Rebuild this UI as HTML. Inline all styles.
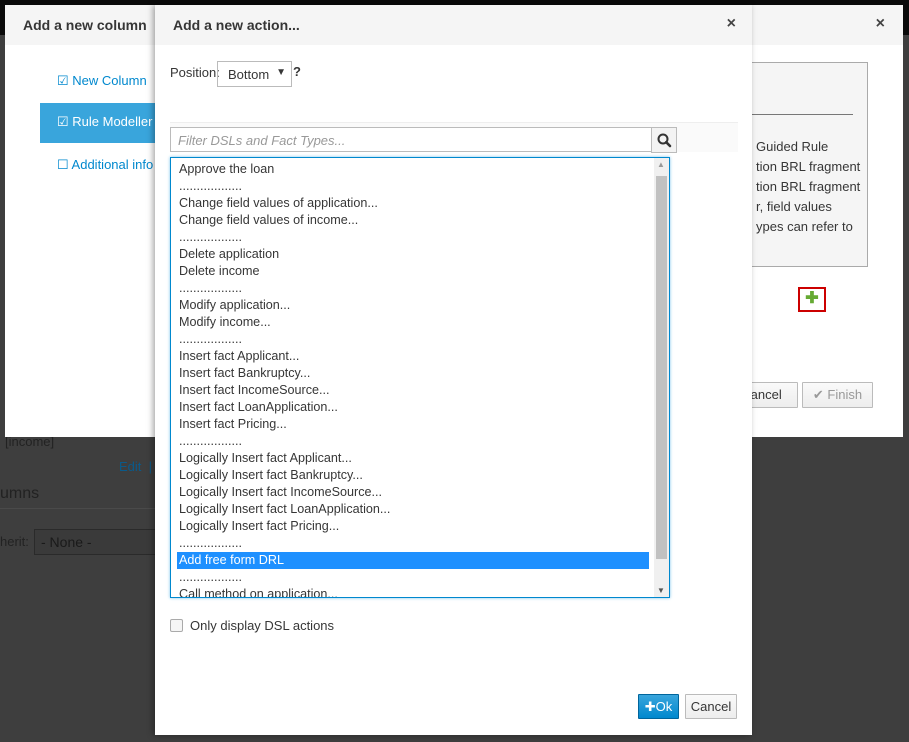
<!DOCTYPE html>
<html><head><meta charset="utf-8"><style>
*{box-sizing:border-box;margin:0;padding:0}
body{width:909px;height:742px;overflow:hidden;background:#3e3e3e;font-family:"Liberation Sans",sans-serif;font-size:13px;color:#363636;position:relative}
.abs{position:absolute}
.top{left:0;top:0;width:909px;height:35px;background:#0a0a0a}
.bg-text{color:#222;font-size:13px}
.back{left:5px;top:5px;width:898px;height:432px;background:#fff}
.hdr{background:#f5f5f5;height:40px;position:absolute;left:0;top:0;right:0}
.hdr b{position:absolute;left:18px;top:12px;font-size:14px;color:#363636}
.x{position:absolute;top:10px;font-size:16px;font-weight:bold;color:#444}
.nav{color:#0088ce;font-size:13px}
.front{left:155px;top:5px;width:597px;height:730px;background:#fff;box-shadow:-2px 0 6px rgba(0,0,0,.35)}
.list div{height:17px;line-height:17px;padding-left:8px;white-space:nowrap;font-size:12.6px}
.btn{position:absolute;border:1px solid #bbb;background:linear-gradient(#fafafa,#ededed);font-size:13px;text-align:center;line-height:23px;border-radius:1px}
</style></head><body>
<div class="abs top"></div>
<div class="abs bg-text" style="left:5px;top:434px">[income]</div>
<div class="abs" style="left:119px;top:459px;color:#0a5a8a">Edit &nbsp;|</div>
<div class="abs" style="left:0;top:485px;font-size:16px;color:#222">umns</div>
<div class="abs" style="left:0;top:508px;width:155px;border-top:1px solid #4a4a4a"></div>
<div class="abs" style="left:0;top:534px;color:#222">herit:</div>
<div class="abs" style="left:34px;top:529px;width:125px;height:26px;border:1px solid #2a2a2a;background:#3a3a3a;color:#1a1a1a;padding:4px 6px;font-size:14px">- None -</div>

<div class="abs back">
 <div class="hdr"><b>Add a new column</b><span class="x" style="right:18px">×</span></div>
 <div class="abs nav" style="left:52px;top:68px">☑ New Column</div>
 <div class="abs" style="left:35px;top:98px;width:120px;height:40px;background:#39a5dc;color:#fff;padding:11px 0 0 17px">☑ Rule Modeller</div>
 <div class="abs nav" style="left:52px;top:152px">☐ Additional info</div>
 <div class="abs" style="left:740px;top:57px;width:123px;height:205px;background:#f5f5f5;border:1px solid #aaa"></div>
 <div class="abs" style="left:740px;top:109px;width:108px;border-top:1px solid #777"></div>
 <div class="abs" style="left:751px;top:132px;line-height:20px;color:#363636">Guided Rule<br>tion BRL fragment<br>tion BRL fragment<br>r, field values<br>ypes can refer to</div>
 <div class="abs" style="left:793px;top:282px;width:28px;height:25px;border:2px solid #c00;color:#6a3;font-weight:bold;font-size:16px;text-align:center;line-height:20px">✚</div>
 <div class="btn" style="left:720px;top:377px;width:73px;height:26px">Cancel</div>
 <div class="btn" style="left:797px;top:377px;width:71px;height:26px;color:#999">✔ Finish</div>
</div>

<div class="abs front">
 <div class="hdr"><b>Add a new action...</b><span class="x" style="right:16px">×</span></div>
 <div class="abs" style="left:15px;top:60px">Position:</div>
 <div class="abs" style="left:62px;top:56px;width:75px;height:26px;border:1px solid #bbb;padding:5px 0 0 10px">Bottom<span style="position:absolute;right:5px;top:5px;font-size:10px">▼</span></div>
 <div class="abs" style="left:138px;top:59px;font-weight:bold">?</div>
 <div class="abs" style="left:15px;top:117px;width:568px;height:30px;background:#fafafa;border-top:1px solid #eee"></div>
 <div class="abs" style="left:15px;top:122px;width:482px;height:25px;border:1px solid #bbb;background:#fff;color:#999;font-style:italic;padding:5px 7px">Filter DSLs and Fact Types...</div>
 <div class="abs" style="left:496px;top:122px;width:26px;height:26px;border:1px solid #bbb;background:#f3f3f3">
  <svg width="24" height="24" viewBox="0 0 24 24"><circle cx="11" cy="11" r="4.5" fill="none" stroke="#333" stroke-width="2"/><line x1="14.2" y1="14.2" x2="18" y2="18" stroke="#333" stroke-width="2.6" stroke-linecap="round"/></svg>
 </div>
 <div class="abs" style="left:15px;top:152px;width:500px;height:441px;border:1px solid #0088ce;box-shadow:0 0 3px #7cc4ec;overflow:hidden">
  <div class="list" style="position:absolute;left:0;top:3px;width:478px">
   <div>Approve the loan</div><div>..................</div><div>Change field values of application...</div><div>Change field values of income...</div><div>..................</div><div>Delete application</div><div>Delete income</div><div>..................</div><div>Modify application...</div><div>Modify income...</div><div>..................</div><div>Insert fact Applicant...</div><div>Insert fact Bankruptcy...</div><div>Insert fact IncomeSource...</div><div>Insert fact LoanApplication...</div><div>Insert fact Pricing...</div><div>..................</div><div>Logically Insert fact Applicant...</div><div>Logically Insert fact Bankruptcy...</div><div>Logically Insert fact IncomeSource...</div><div>Logically Insert fact LoanApplication...</div><div>Logically Insert fact Pricing...</div><div>..................</div><div style="background:#1e90ff;color:#fff;margin-left:6px;padding-left:2px">Add free form DRL</div><div>..................</div><div>Call method on application...</div>
  </div>
  <div style="position:absolute;right:0;top:0;width:15px;height:439px;background:#f0f0f0">
   <div style="position:absolute;left:2px;top:18px;width:11px;height:383px;background:#c1c1c1"></div>
   <div style="position:absolute;left:3px;top:2px;font-size:8px;color:#999">▲</div>
   <div style="position:absolute;left:3px;bottom:2px;font-size:8px;color:#555">▼</div>
  </div>
 </div>
 <div class="abs" style="left:15px;top:614px;width:13px;height:13px;border:1px solid #aaa;border-radius:2px;background:#f5f5f5"></div>
 <div class="abs" style="left:35px;top:613px">Only display DSL actions</div>
 <div class="btn" style="left:483px;top:689px;width:41px;height:25px;background:linear-gradient(#39a5dc,#0088ce);border-color:#00659c;color:#fff">✚Ok</div>
 <div class="btn" style="left:530px;top:689px;width:52px;height:25px">Cancel</div>
</div>
</body></html>
